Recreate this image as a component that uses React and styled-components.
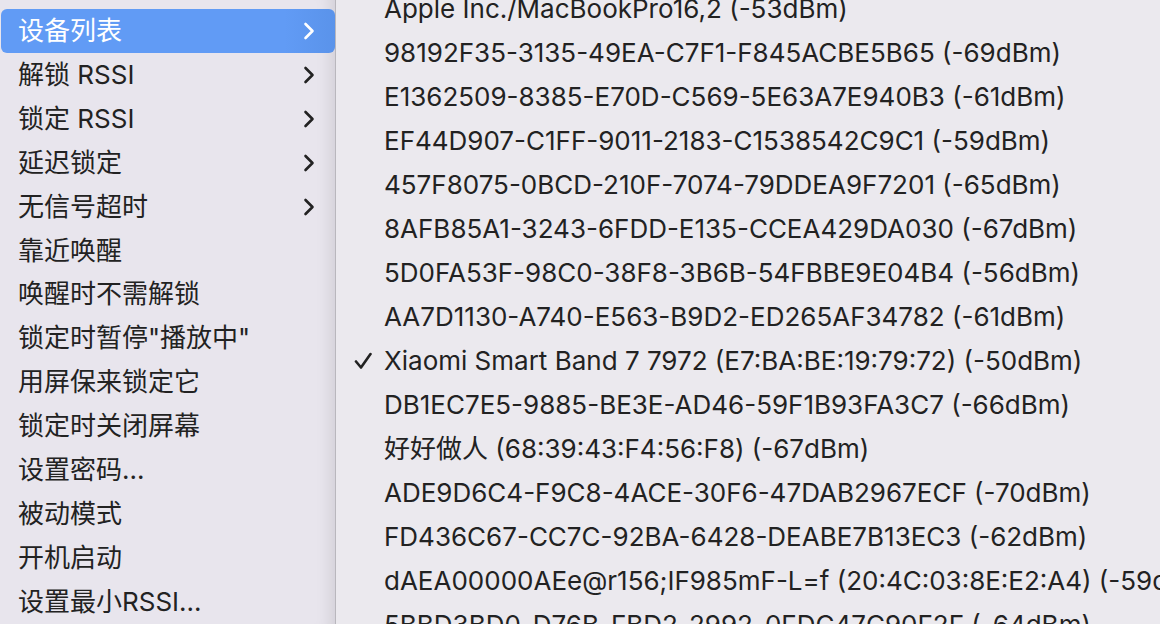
import React from 'react';
import styled, { createGlobalStyle } from 'styled-components';

const Global = createGlobalStyle`
  html, body {
    margin: 0;
    padding: 0;
    overflow: hidden;
    background: #ebe9ee;
  }
  body {
    font-family: Inter, "Noto Sans CJK SC", "Noto Sans", sans-serif;
    -webkit-font-smoothing: antialiased;
  }
`;

const Screen = styled.div`
  display: flex;
  width: 1160px;
  height: 624px;
  overflow: hidden;
`;

const MainMenu = styled.div`
  width: 335px;
  flex-shrink: 0;
  padding-top: 9px;
  background: #e8e5ed;
  border-right: 1px solid #b9b7bd;
  box-shadow: inset -18px 0 16px -14px rgba(0, 0, 0, 0.1);
  display: flex;
  flex-direction: column;
`;

const MenuItem = styled.div`
  height: 44px;
  margin-left: 1px;
  padding: 0 20px 0 17px;
  display: flex;
  align-items: center;
  justify-content: space-between;
  font-size: 26px;
  line-height: 1;
  color: ${p => (p.$active ? '#ffffff' : '#222222')};
  background: ${p => (p.$active ? 'linear-gradient(to right, #619bf5 85%, #5a93ea)' : 'transparent')};
  border-radius: 6px;
  white-space: nowrap;
`;

const SubMenu = styled.div`
  flex: 1;
  min-width: 0;
  background: #ebe9ee;
  display: flex;
  flex-direction: column;
  margin-top: -13px;
`;

const DeviceRow = styled.div`
  height: 44px;
  flex-shrink: 0;
  display: flex;
  align-items: center;
  font-size: 26px;
  line-height: 1;
  color: #222222;
  white-space: nowrap;
`;

const CheckSlot = styled.div`
  width: 48px;
  flex-shrink: 0;
  display: flex;
  justify-content: flex-end;
  padding-right: 12px;
  box-sizing: border-box;
`;

const Chevron = ({ color }) => (
  <svg width="12" height="18" viewBox="0 0 12 18">
    <polyline points="2.5,2 9.5,9 2.5,16" fill="none" stroke={color} strokeWidth="2.6" strokeLinecap="round" strokeLinejoin="round" />
  </svg>
);

const Check = () => (
  <svg width="18" height="18" viewBox="0 0 18 18">
    <polyline points="2,9.5 7,15.5 16.5,2" fill="none" stroke="#222222" strokeWidth="2.6" strokeLinecap="round" strokeLinejoin="round" />
  </svg>
);

const menu = [
  { label: '设备列表', sub: true, active: true },
  { label: '解锁 RSSI', sub: true },
  { label: '锁定 RSSI', sub: true },
  { label: '延迟锁定', sub: true },
  { label: '无信号超时', sub: true },
  { label: '靠近唤醒' },
  { label: '唤醒时不需解锁' },
  { label: '锁定时暂停"播放中"' },
  { label: '用屏保来锁定它' },
  { label: '锁定时关闭屏幕' },
  { label: '设置密码...' },
  { label: '被动模式' },
  { label: '开机启动' },
  { label: '设置最小RSSI...' },
];

const devices = [
  'Apple Inc./MacBookPro16,2 (-53dBm)',
  '98192F35-3135-49EA-C7F1-F845ACBE5B65 (-69dBm)',
  'E1362509-8385-E70D-C569-5E63A7E940B3 (-61dBm)',
  'EF44D907-C1FF-9011-2183-C1538542C9C1 (-59dBm)',
  '457F8075-0BCD-210F-7074-79DDEA9F7201 (-65dBm)',
  '8AFB85A1-3243-6FDD-E135-CCEA429DA030 (-67dBm)',
  '5D0FA53F-98C0-38F8-3B6B-54FBBE9E04B4 (-56dBm)',
  'AA7D1130-A740-E563-B9D2-ED265AF34782 (-61dBm)',
  'Xiaomi Smart Band 7 7972 (E7:BA:BE:19:79:72) (-50dBm)',
  'DB1EC7E5-9885-BE3E-AD46-59F1B93FA3C7 (-66dBm)',
  '好好做人 (68:39:43:F4:56:F8) (-67dBm)',
  'ADE9D6C4-F9C8-4ACE-30F6-47DAB2967ECF (-70dBm)',
  'FD436C67-CC7C-92BA-6428-DEABE7B13EC3 (-62dBm)',
  'dAEA00000AEe@r156;IF985mF-L=f (20:4C:03:8E:E2:A4) (-59dBm)',
  '5BBD3BD0-D76B-FBD2-2992-0FDC47C90F2F (-64dBm)',
];

export default function App() {
  return (
    <Screen>
      <Global />
      <MainMenu>
        {menu.map(item => (
          <MenuItem key={item.label} $active={item.active}>
            <span>{item.label}</span>
            {item.sub && <Chevron color={item.active ? '#ffffff' : '#222222'} />}
          </MenuItem>
        ))}
      </MainMenu>
      <SubMenu>
        {devices.map(d => (
          <DeviceRow key={d}>
            <CheckSlot>{d.startsWith('Xiaomi') && <Check />}</CheckSlot>
            <span>{d}</span>
          </DeviceRow>
        ))}
      </SubMenu>
    </Screen>
  );
}
